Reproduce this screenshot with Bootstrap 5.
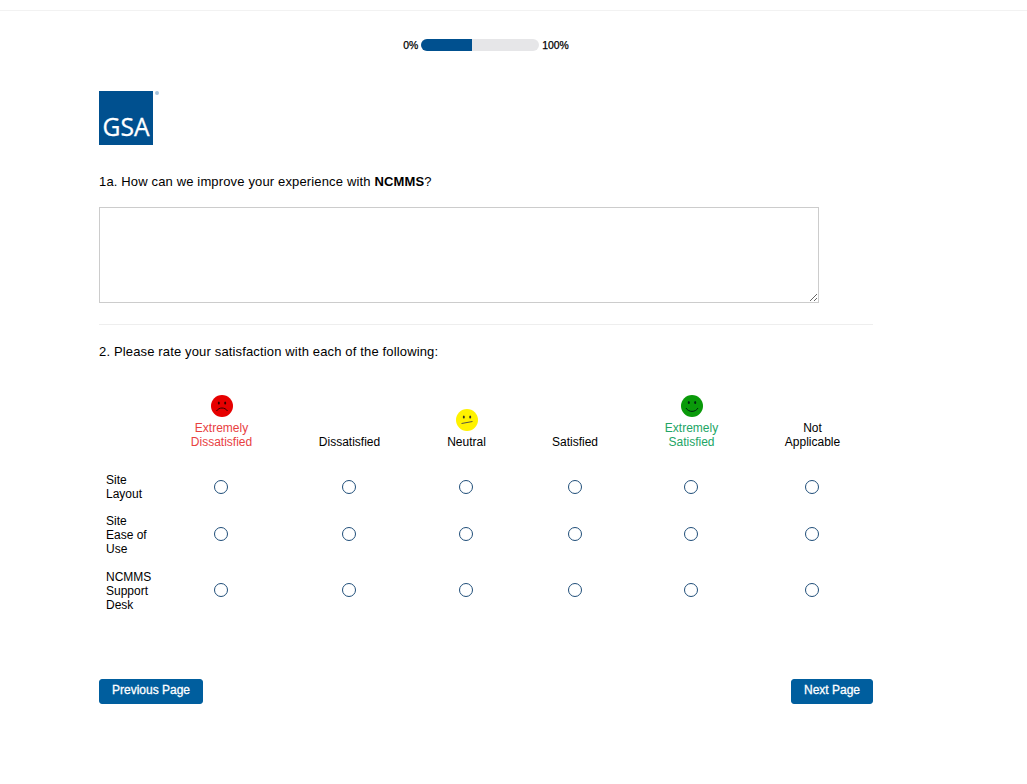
<!DOCTYPE html>
<html lang="en">
<head>
<meta charset="utf-8">
<title>Survey</title>
<link rel="stylesheet" href="https://cdn.jsdelivr.net/npm/bootstrap@5.3.0/dist/css/bootstrap.min.css">
<style>
html,body{background:#fff;}
body{font-family:"Liberation Sans",Arial,sans-serif;font-size:12px;line-height:14px;color:#000;height:784px;overflow:hidden;}
.topstrip{height:11px;border-bottom:1px solid #f2f2f2;}
.progwrap{height:12px;margin-top:28px;gap:3px;font-size:10.4px;font-weight:400;line-height:12px;-webkit-text-stroke:.25px #000;}
.proglabel{padding-top:1px;}
.progtrack{width:118px;height:12px;border-radius:6px;background:#e6e6e8;overflow:hidden;}
.progfill{height:12px;background:#00508f;}
.sheet{width:774px;margin-left:99px;}
.gsalogo{display:block;margin-top:40px;}
.qtext{font-size:13px;line-height:15px;letter-spacing:.15px;margin:0;}
.q1{margin-top:29px;}
.answer{display:block;width:720px;height:96px;margin-top:18px;border:1px solid #ccc;border-radius:0;}
.rule{border-top:1px solid #eee;margin-top:21px;}
.q2{margin-top:19px;}
.matrix{table-layout:fixed;width:774px;margin-top:36px;border-collapse:collapse;}
.matrix th{font-weight:400;text-align:center;vertical-align:bottom;padding:0 0 17px;}
.matrix td{padding:7px 0;text-align:center;vertical-align:middle;}
.matrix td.rowlabel{text-align:left;padding-left:7px;padding-right:0;}
.matrix tbody tr:first-child td{padding-bottom:6px;}
.matrix tbody tr:first-child .dot{margin-bottom:1px;}
.faceicon{display:block;margin:0 auto 4px;}
.reddish{color:#e8413f;}
.greenish{color:#22a565;}
.dot{display:inline-block;width:14px;height:14px;margin:0 1px 2px 0;vertical-align:middle;border:1.6px solid #1f4e79;border-radius:50%;background:#fff;appearance:none;-webkit-appearance:none;}
.navrow{margin-top:60px;}
.pagebtn{background:#005e9e;border:1px solid #005e9e;color:#fff;font-size:12px;font-weight:400;-webkit-text-stroke:.3px #fff;line-height:14px;padding:2px 0 6px;border-radius:3px;height:25px;}
.pagebtn:hover{background:#005e9e;border-color:#005e9e;color:#fff;}
.btnprev{width:104px;}
.btnnext{width:82px;}
</style>
</head>
<body>
<div class="topstrip"></div>
<div class="sheet">
  <div class="progwrap d-flex justify-content-center align-items-center">
    <span class="proglabel">0%</span>
    <div class="progtrack"><div class="progfill" style="width:43%"></div></div>
    <span class="proglabel">100%</span>
  </div>
  <svg class="gsalogo" width="62" height="54" viewBox="0 0 62 54" role="img" aria-label="GSA">
    <rect width="54" height="54" fill="#00508f"/>
    <text x="27" y="45" text-anchor="middle" font-family="Open Sans, Liberation Sans, sans-serif" font-size="25" font-weight="500" fill="#fff" stroke="#fff" stroke-width=".3" textLength="47" lengthAdjust="spacingAndGlyphs">GSA</text>
    <path d="M44 45l-.500-6 -3.500 6 3.500-2z" fill="#00508f"/>
    <circle cx="58" cy="2" r="2" fill="#a9c4dc"/>
  </svg>
  <p class="qtext q1">1a. How can we improve your experience with <b>NCMMS</b>?</p>
  <textarea class="answer" aria-label="Answer"></textarea>
  <div class="rule"></div>
  <p class="qtext q2">2. Please rate your satisfaction with each of the following:</p>
  <table class="matrix">
    <colgroup><col style="width:59px"><col style="width:127px"><col style="width:129px"><col style="width:105px"><col style="width:112px"><col style="width:121px"><col style="width:121px"></colgroup>
    <thead>
      <tr>
        <th></th>
        <th class="reddish">
          <svg class="faceicon" width="22" height="22" viewBox="0 0 22 22"><circle cx="11" cy="11" r="11" fill="#e60000"/><ellipse cx="7.800" cy="8" rx="1" ry="1.600" fill="#300"/><ellipse cx="14.200" cy="8" rx="1" ry="1.600" fill="#300"/><path d="M5.500 16c2.500-4 8.500-4 11 0" fill="none" stroke="#300" stroke-width="1"/></svg>
          Extremely<br>Dissatisfied
        </th>
        <th>Dissatisfied</th>
        <th>
          <svg class="faceicon" width="22" height="22" viewBox="0 0 22 22"><circle cx="11" cy="11" r="11" fill="#fff200"/><ellipse cx="7.800" cy="8" rx="1" ry="1.600" fill="#332"/><ellipse cx="14.200" cy="8" rx="1" ry="1.600" fill="#332"/><path d="M5.500 14.500l11-2" fill="none" stroke="#554" stroke-width="1"/></svg>
          Neutral
        </th>
        <th>Satisfied</th>
        <th class="greenish">
          <svg class="faceicon" width="22" height="22" viewBox="0 0 22 22"><circle cx="11" cy="11" r="11" fill="#0a9a0a"/><ellipse cx="7.800" cy="7.500" rx="1" ry="1.600" fill="#021"/><ellipse cx="14.200" cy="7.500" rx="1" ry="1.600" fill="#021"/><path d="M5 13c2.500 4.500 9.500 4.500 12 0" fill="none" stroke="#021" stroke-width="1"/></svg>
          Extremely<br>Satisfied
        </th>
        <th>Not<br>Applicable</th>
      </tr>
    </thead>
    <tbody>
      <tr>
        <td class="rowlabel">Site<br>Layout</td>
        <td><input class="dot" type="radio" name="r1" aria-label="Extremely Dissatisfied"></td>
        <td><input class="dot" type="radio" name="r1" aria-label="Dissatisfied"></td>
        <td><input class="dot" type="radio" name="r1" aria-label="Neutral"></td>
        <td><input class="dot" type="radio" name="r1" aria-label="Satisfied"></td>
        <td><input class="dot" type="radio" name="r1" aria-label="Extremely Satisfied"></td>
        <td><input class="dot" type="radio" name="r1" aria-label="Not Applicable"></td>
      </tr>
      <tr>
        <td class="rowlabel">Site<br>Ease of<br>Use</td>
        <td><input class="dot" type="radio" name="r2" aria-label="Extremely Dissatisfied"></td>
        <td><input class="dot" type="radio" name="r2" aria-label="Dissatisfied"></td>
        <td><input class="dot" type="radio" name="r2" aria-label="Neutral"></td>
        <td><input class="dot" type="radio" name="r2" aria-label="Satisfied"></td>
        <td><input class="dot" type="radio" name="r2" aria-label="Extremely Satisfied"></td>
        <td><input class="dot" type="radio" name="r2" aria-label="Not Applicable"></td>
      </tr>
      <tr>
        <td class="rowlabel">NCMMS<br>Support<br>Desk</td>
        <td><input class="dot" type="radio" name="r3" aria-label="Extremely Dissatisfied"></td>
        <td><input class="dot" type="radio" name="r3" aria-label="Dissatisfied"></td>
        <td><input class="dot" type="radio" name="r3" aria-label="Neutral"></td>
        <td><input class="dot" type="radio" name="r3" aria-label="Satisfied"></td>
        <td><input class="dot" type="radio" name="r3" aria-label="Extremely Satisfied"></td>
        <td><input class="dot" type="radio" name="r3" aria-label="Not Applicable"></td>
      </tr>
    </tbody>
  </table>
  <div class="navrow d-flex justify-content-between">
    <button type="button" class="btn pagebtn btnprev">Previous Page</button>
    <button type="button" class="btn pagebtn btnnext">Next Page</button>
  </div>
</div>
<script src="https://cdn.jsdelivr.net/npm/bootstrap@5.3.0/dist/js/bootstrap.bundle.min.js"></script>
</body>
</html>
